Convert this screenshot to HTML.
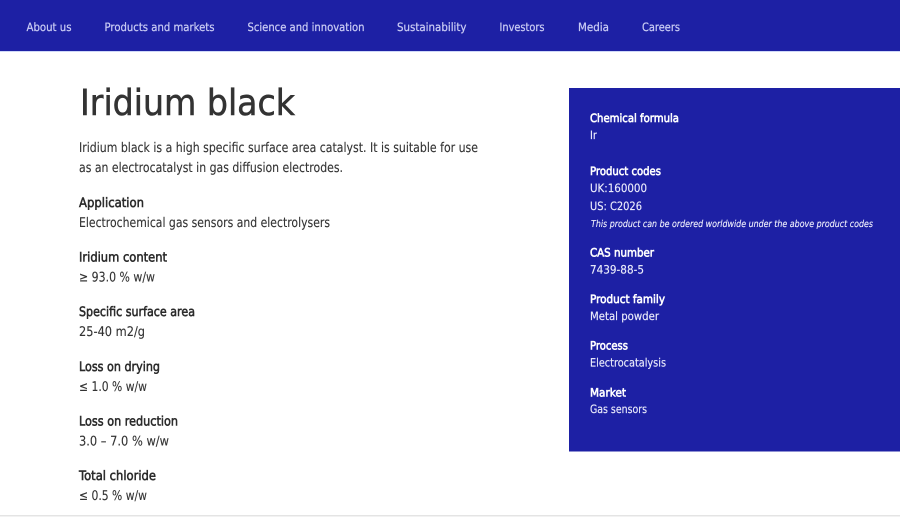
<!DOCTYPE html>
<html lang="en">
<head>
<meta charset="utf-8">
<title>Iridium black</title>
<style>
html,body{margin:0;padding:0;background:#fff;width:900px;height:518px;overflow:hidden}
svg{position:absolute;left:0;top:0;display:block}
text{font-family:"DejaVu Sans","Liberation Sans",sans-serif;font-size:13px;text-rendering:geometricPrecision}
.n{fill:#c9cbf4;font-size:11.500px;stroke:#c9cbf4;stroke-width:.25}
.t{fill:#333;font-size:36px;stroke:#333;stroke-width:.55}
.b{fill:#2a2a2a;font-size:13px;stroke:#2a2a2a;stroke-width:.55}
.p{fill:#333;font-size:13.300px;stroke:#333;stroke-width:.12}
.w{fill:#fff;font-size:11.500px;stroke:#fff;stroke-width:.6}
.v{fill:#eceDfc;font-size:11.500px;stroke:#eceDfc;stroke-width:.15}
.i{fill:#f2f2fd;font-size:9.500px;font-style:italic;stroke:#f2f2fd;stroke-width:.12}
</style>
</head>
<body>
<svg width="900" height="518" viewBox="0 0 900 518" xmlns="http://www.w3.org/2000/svg">
<rect x="0" y="0" width="900" height="51" fill="#1d20a4"/>
<rect x="0" y="51" width="900" height="1" fill="#cfd8f8"/>
<rect x="569" y="88" width="331" height="363.500" fill="#1d20a4"/>
<rect x="0" y="515" width="900" height="1.500" fill="#e4e4e4"/>

<text class="n" x="26.500" y="31" textLength="45" lengthAdjust="spacingAndGlyphs">About us</text>
<text class="n" x="104.500" y="31" textLength="110" lengthAdjust="spacingAndGlyphs">Products and markets</text>
<text class="n" x="247.500" y="31" textLength="117" lengthAdjust="spacingAndGlyphs">Science and innovation</text>
<text class="n" x="397" y="31" textLength="69.500" lengthAdjust="spacingAndGlyphs">Sustainability</text>
<text class="n" x="499.500" y="31" textLength="45" lengthAdjust="spacingAndGlyphs">Investors</text>
<text class="n" x="578" y="31" textLength="31" lengthAdjust="spacingAndGlyphs">Media</text>
<text class="n" x="642" y="31" textLength="38" lengthAdjust="spacingAndGlyphs">Careers</text>

<text class="t" x="80" y="115" textLength="215" lengthAdjust="spacingAndGlyphs">Iridium black</text>
<text class="p" x="79" y="152" textLength="399" lengthAdjust="spacingAndGlyphs">Iridium black is a high specific surface area catalyst. It is suitable for use</text>
<text class="p" x="79" y="172" textLength="264" lengthAdjust="spacingAndGlyphs">as an electrocatalyst in gas diffusion electrodes.</text>

<text class="b" x="79" y="207" textLength="65" lengthAdjust="spacingAndGlyphs">Application</text>
<text class="p" x="79" y="227" textLength="251" lengthAdjust="spacingAndGlyphs">Electrochemical gas sensors and electrolysers</text>
<text class="b" x="79" y="261.500" textLength="88" lengthAdjust="spacingAndGlyphs">Iridium content</text>
<text class="p" x="79" y="281.500" textLength="76" lengthAdjust="spacingAndGlyphs">≥ 93.0 % w/w</text>
<text class="b" x="79" y="316" textLength="116" lengthAdjust="spacingAndGlyphs">Specific surface area</text>
<text class="p" x="79" y="336" textLength="66" lengthAdjust="spacingAndGlyphs">25-40 m2/g</text>
<text class="b" x="79" y="371" textLength="81" lengthAdjust="spacingAndGlyphs">Loss on drying</text>
<text class="p" x="79" y="391" textLength="68" lengthAdjust="spacingAndGlyphs">≤ 1.0 % w/w</text>
<text class="b" x="79" y="425.500" textLength="99" lengthAdjust="spacingAndGlyphs">Loss on reduction</text>
<text class="p" x="79" y="445.500" textLength="90" lengthAdjust="spacingAndGlyphs">3.0 – 7.0 % w/w</text>
<text class="b" x="79" y="480" textLength="77" lengthAdjust="spacingAndGlyphs">Total chloride</text>
<text class="p" x="79" y="500" textLength="68" lengthAdjust="spacingAndGlyphs">≤ 0.5 % w/w</text>

<text class="w" x="590" y="122" textLength="89" lengthAdjust="spacingAndGlyphs">Chemical formula</text>
<text class="v" x="590" y="139" textLength="7" lengthAdjust="spacingAndGlyphs">Ir</text>
<text class="w" x="590" y="175" textLength="71" lengthAdjust="spacingAndGlyphs">Product codes</text>
<text class="v" x="590" y="192" textLength="57" lengthAdjust="spacingAndGlyphs">UK:160000</text>
<text class="v" x="590" y="210" textLength="52" lengthAdjust="spacingAndGlyphs">US: C2026</text>
<text class="i" x="591" y="227" textLength="282" lengthAdjust="spacingAndGlyphs">This product can be ordered worldwide under the above product codes</text>
<text class="w" x="590" y="256.500" textLength="64" lengthAdjust="spacingAndGlyphs">CAS number</text>
<text class="v" x="590" y="273.500" textLength="54" lengthAdjust="spacingAndGlyphs">7439-88-5</text>
<text class="w" x="590" y="303" textLength="75" lengthAdjust="spacingAndGlyphs">Product family</text>
<text class="v" x="590" y="320" textLength="69" lengthAdjust="spacingAndGlyphs">Metal powder</text>
<text class="w" x="590" y="349.500" textLength="38" lengthAdjust="spacingAndGlyphs">Process</text>
<text class="v" x="590" y="366.500" textLength="76" lengthAdjust="spacingAndGlyphs">Electrocatalysis</text>
<text class="w" x="590" y="396.500" textLength="36" lengthAdjust="spacingAndGlyphs">Market</text>
<text class="v" x="590" y="413" textLength="57" lengthAdjust="spacingAndGlyphs">Gas sensors</text>
</svg>
</body>
</html>
